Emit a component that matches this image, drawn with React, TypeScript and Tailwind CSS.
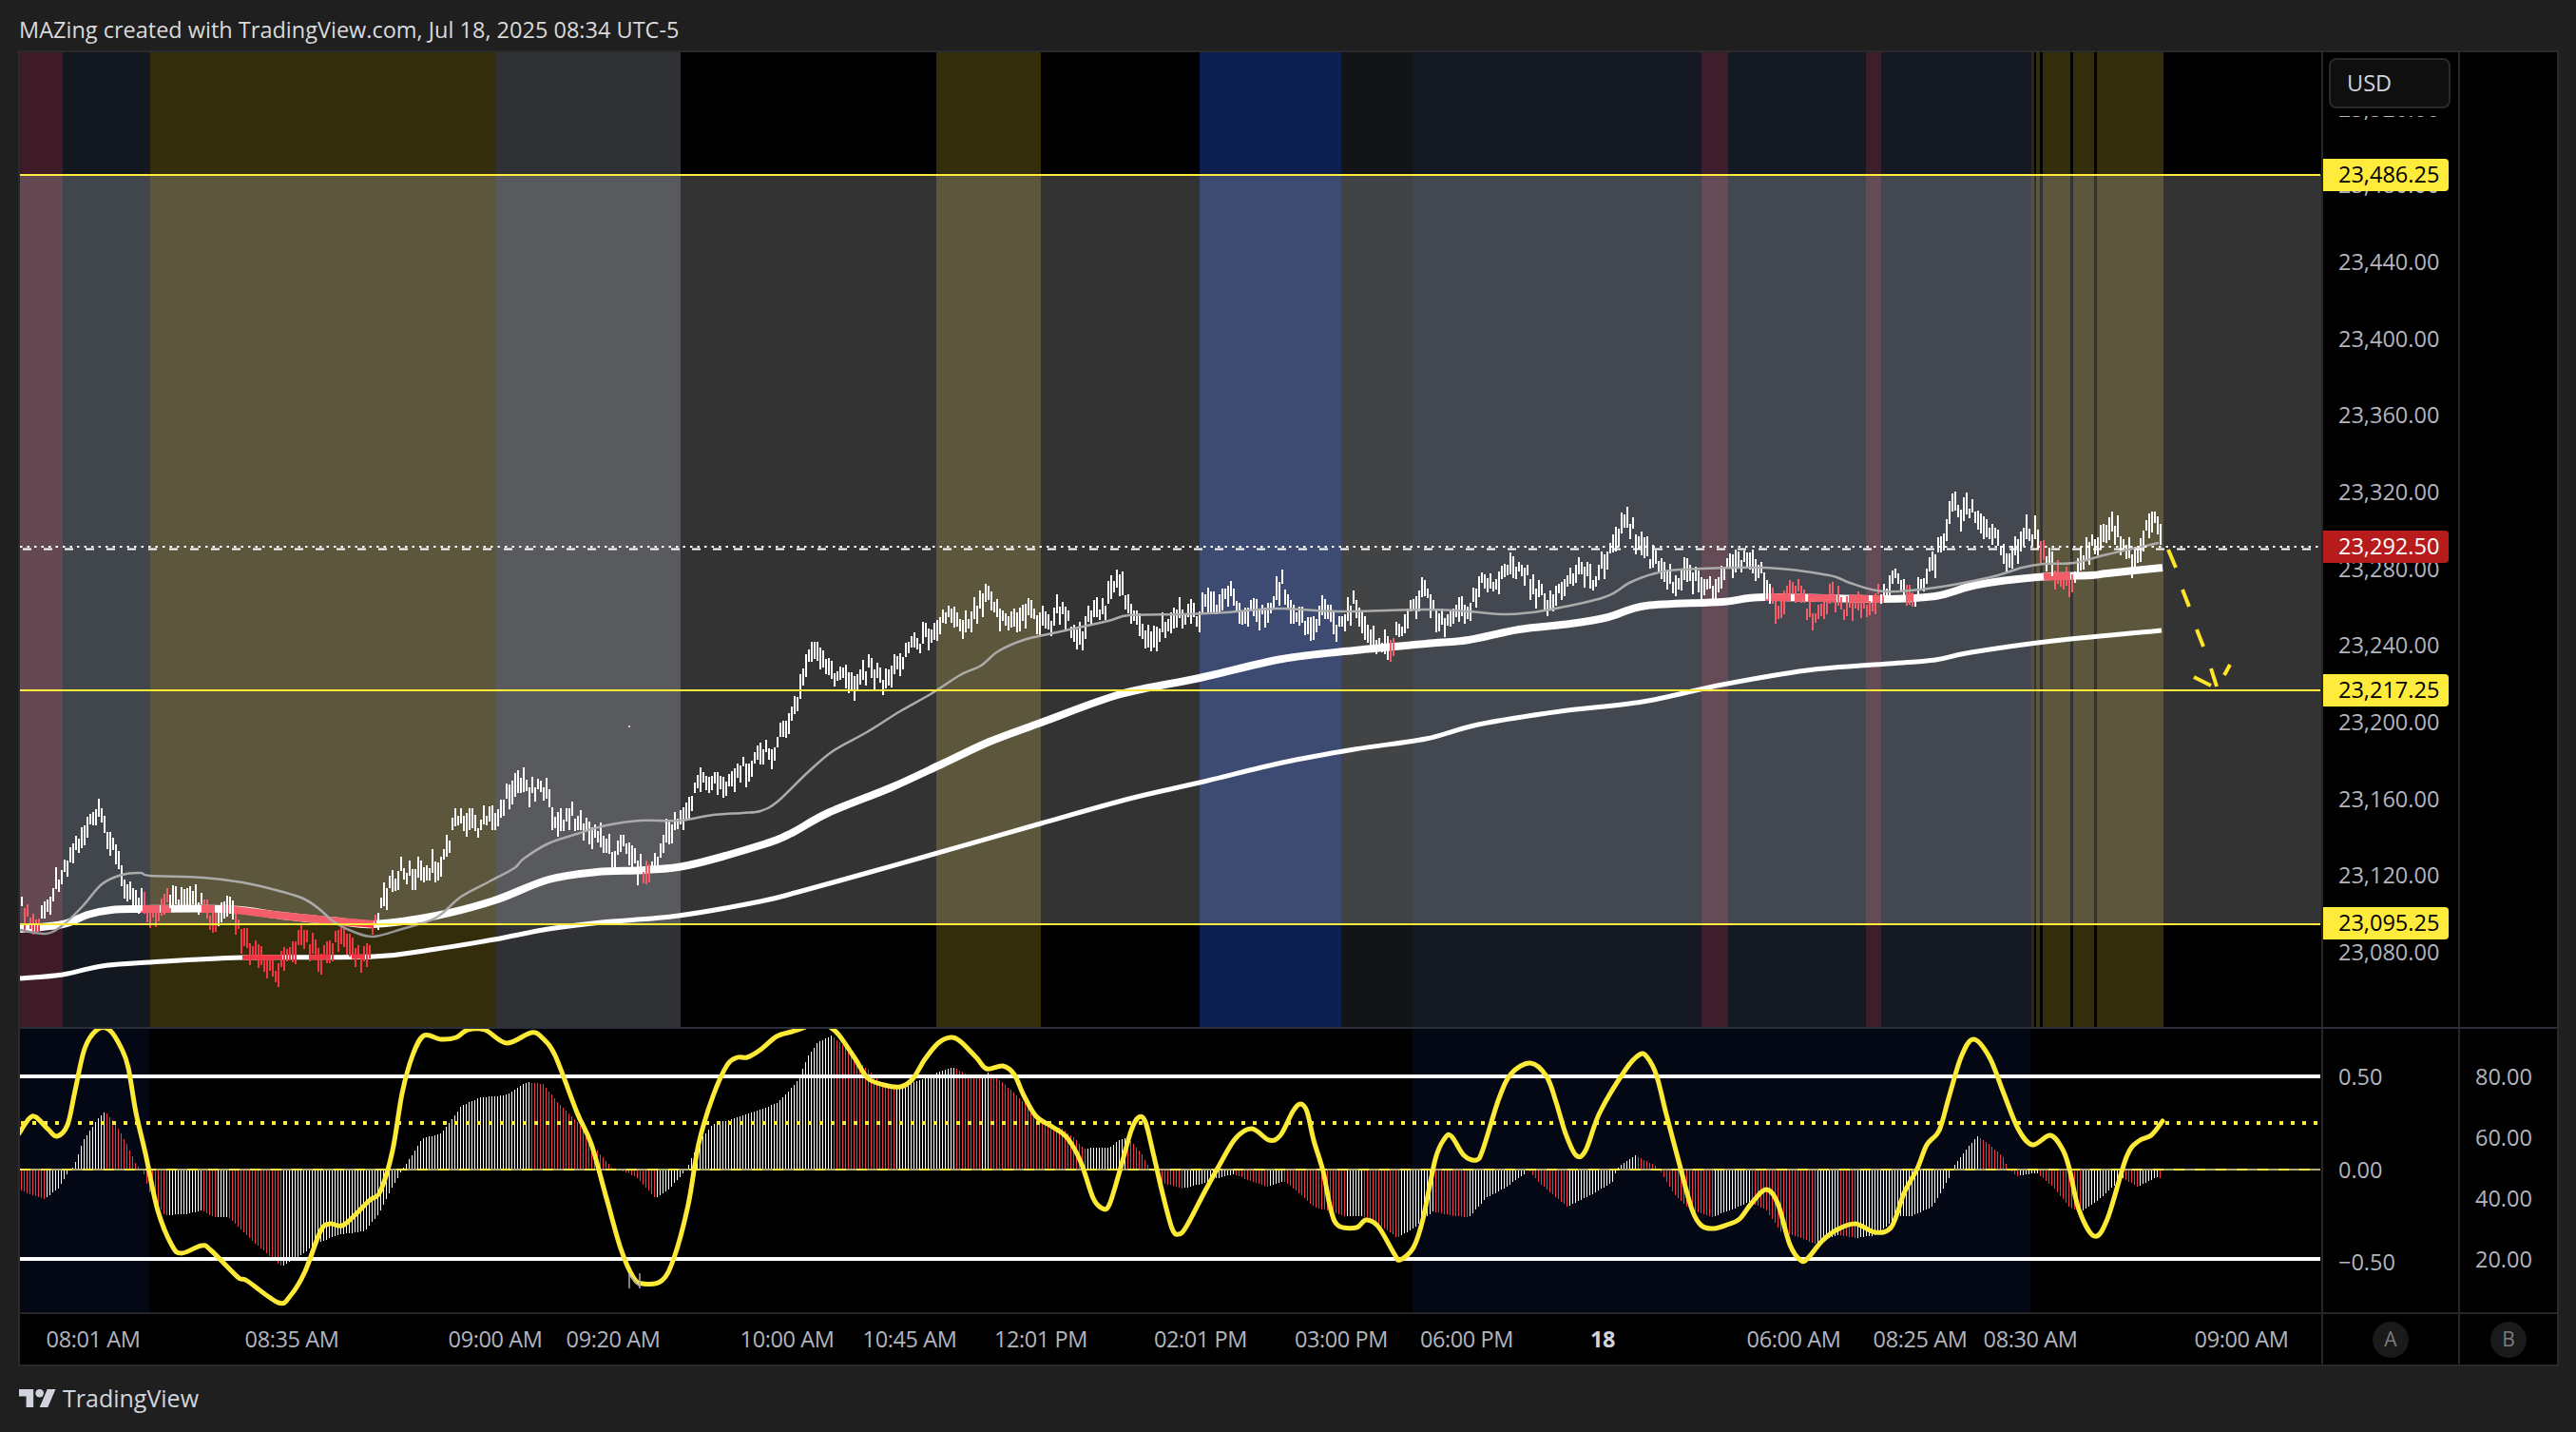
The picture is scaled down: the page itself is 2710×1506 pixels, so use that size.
import React from "react";

type Pt = number[];

const FONT = "font-['Open_Sans','Noto_Sans',sans-serif]";

const bands: [number, string][] = [
  [66, "bg-[#3e1b27]"], [158, "bg-[#121720]"], [521, "bg-[#342d0c]"], [716, "bg-[#2f3135]"],
  [985, "bg-black"], [1095, "bg-[#342d0c]"], [1262, "bg-black"], [1411, "bg-[#0d1f4f]"],
  [1486, "bg-[#131416]"], [1790, "bg-[#141923]"], [1818, "bg-[#3f1e2b]"], [1963, "bg-[#141923]"],
  [1979, "bg-[#3f1e2b]"], [2137, "bg-[#141923]"], [2140, "bg-[#2c270d]"], [2142, "bg-black"],
  [2146, "bg-[#342d0c]"], [2149, "bg-black"], [2178, "bg-[#342d0c]"], [2181, "bg-black"],
  [2203, "bg-[#342d0c]"], [2206, "bg-black"], [2276, "bg-[#342d0c]"], [2442, "bg-black"],
];

const lowerBands: [number, string][] = [
  [157, "bg-[#030814]"], [1486, "bg-black"], [2136, "bg-[#030814]"], [2442, "bg-black"],
];

const price: Pt = [
  23,957, 31,970, 36,977, 46,960, 56,933, 66,913, 77,893, 87,877, 102,857, 110,870, 120,897, 128,923, 138,940, 148,947,
  153,960, 166,967, 179,940, 196,950, 209,950, 219,967, 224,975, 235,957, 245,963, 253,987, 265,1003, 278,1017, 293,1020,
  301,1000, 321,987, 334,1010, 355,987, 370,997, 382,1007, 393,980, 400,953, 408,933, 421,917, 434,920, 449,913, 459,913,
  472,883, 482,857, 492,860, 500,870, 510,863, 520,860, 531,843, 541,820, 556,830, 569,823, 577,847, 587,870, 602,857,
  622,880, 633,880, 643,897, 658,887, 668,907, 679,920, 689,907, 699,883, 712,860, 724,853, 735,817, 755,827, 776,813,
  796,797, 811,790, 822,773, 838,740, 845,707, 853,680, 867,703, 880,710, 898,717, 912,703, 929,717, 943,700, 956,677,
  970,673, 983,657, 1001,643, 1014,657, 1028,637, 1039,617, 1048,643, 1063,657, 1081,640, 1090,650, 1104,657, 1112,640,
  1128,660, 1137,670, 1146,643, 1162,637, 1177,610, 1188,637, 1204,677, 1215,667, 1235,650, 1249,643, 1260,650, 1269,623,
  1280,640, 1291,623, 1304,640, 1329,650, 1347,613, 1358,637, 1371,657, 1383,657, 1392,637, 1403,660, 1423,637, 1438,660,
  1445,673, 1461,683, 1481,643, 1499,617, 1513,653, 1531,647, 1545,637, 1560,603, 1574,623, 1585,593, 1603,603, 1618,627,
  1632,633, 1650,617, 1658,597, 1676,607, 1688,593, 1699,560, 1708,550, 1716,553, 1725,577, 1741,590, 1763,620, 1772,603,
  1790,610, 1801,620, 1812,597, 1833,587, 1853,603, 1862,623, 1868,648, 1877,633, 1891,623, 1906,648, 1924,623, 1940,643,
  1953,633, 1967,640, 1973,630, 1980,623, 1995,600, 2004,620, 2011,637, 2020,613, 2031,597, 2042,570, 2054,527, 2060,540,
  2071,533, 2085,557, 2098,563, 2114,590, 2129,557, 2143,563, 2147,575, 2152,587, 2166,610, 2172,615, 2178,610, 2187,590,
  2203,573, 2222,552, 2232,570, 2242,590, 2248,580, 2256,557, 2267,547, 2273,567,
];

const redRanges: Pt[] = [
  [25, 42], [150, 175], [213, 228], [245, 396], [676, 684], [1462, 1466], [1862, 1976], [2005, 2012], [2145, 2149], [2160, 2181],
];

const grayMA: Pt = [
  21,978, 48,982, 66,973, 87,953, 107,930, 128,920, 148,918, 158,921, 214,923, 255,928, 286,935, 319,945, 337,957, 352,970,
  372,980, 393,985, 423,977, 459,965, 485,943, 515,927, 541,913, 551,903, 577,887, 607,877, 638,868, 673,863, 714,863,
  750,857, 781,855, 800,853, 818,843, 849,813, 876,790, 912,770, 947,748, 979,730, 1010,710, 1032,700, 1050,685, 1077,673,
  1112,665, 1166,653, 1188,647, 1246,646, 1291,644, 1345,640, 1407,643, 1500,641, 1545,643, 1585,646, 1625,642, 1688,628,
  1714,613, 1741,603, 1768,599, 1857,597, 1924,605, 1946,613, 1982,622, 2036,618, 2094,607, 2127,597, 2150,593, 2182,592,
  2217,583, 2271,571,
];

const thickMA: Pt = [
  21,977, 66,972, 92,962, 117,957, 148,956, 240,956, 296,963, 357,969, 393,972, 459,963, 520,947, 577,925, 628,917, 679,915,
  724,910, 800,889, 831,877, 871,855, 938,828, 992,803, 1041,780, 1095,760, 1179,730, 1262,713, 1349,693, 1425,684, 1500,677,
  1545,673, 1598,662, 1652,656, 1692,649, 1732,637, 1812,633, 1857,628, 1978,630, 2036,627, 2080,615, 2143,607, 2200,605,
  2217,603, 2275,597,
];

const slowMA: Pt = [
  21,1029, 66,1025, 107,1016, 158,1012, 255,1007, 393,1006, 459,998, 520,988, 577,977, 633,970, 714,963, 800,948, 840,938,
  916,917, 983,898, 1095,866, 1188,840, 1262,823, 1349,802, 1425,788, 1500,777, 1555,762, 1642,748, 1728,738, 1812,720, 1901,705,
  1987,698, 2036,694, 2074,686, 2160,674, 2274,663,
];

const thickRed: Pt[] = [
  [148, 166], [171, 180], [212, 226], [232, 393], [1857, 1884], [1890, 1897], [1902, 1932], [1946, 1966], [1970, 1982], [2005, 2012], [2150, 2178],
];
const slowRed: Pt[] = [[255, 296], [327, 347], [370, 384]];

const hist: Pt = [
  21,1252, 46,1261, 61,1250, 71,1233, 77,1227, 87,1200, 102,1177, 110,1169, 122,1183, 133,1203, 143,1225, 150,1232, 158,1257,
  173,1278, 194,1277, 212,1273, 224,1280, 240,1280, 265,1305, 296,1332, 316,1320, 332,1308, 357,1298, 383,1295, 398,1277,
  413,1247, 423,1230, 434,1213, 444,1197, 464,1192, 485,1163, 505,1154, 531,1152, 554,1138, 571,1140, 587,1160, 607,1180,
  628,1210, 643,1228, 668,1237, 689,1260, 704,1250, 722,1230, 735,1200, 750,1182, 776,1175, 800,1167, 817,1160, 830,1147,
  840,1134, 850,1110, 860,1096, 875,1089, 887,1100, 900,1115, 913,1125, 927,1139, 940,1145, 957,1139, 973,1134, 987,1127,
  1002,1122, 1017,1130, 1030,1132, 1040,1128, 1053,1137, 1067,1150, 1083,1165, 1100,1184, 1117,1187, 1130,1197, 1140,1208,
  1153,1207, 1167,1207, 1177,1199, 1185,1196, 1200,1212, 1208,1227, 1215,1234, 1223,1244, 1243,1250, 1263,1245, 1280,1239,
  1297,1235, 1313,1241, 1333,1248, 1350,1242, 1363,1252, 1383,1270, 1400,1274, 1413,1279, 1433,1279, 1453,1290, 1470,1302,
  1490,1289, 1507,1274, 1530,1279, 1545,1280, 1563,1260, 1583,1249, 1603,1235, 1607,1230, 1620,1245, 1648,1269, 1677,1255,
  1697,1242, 1700,1230, 1705,1225, 1720,1215, 1740,1225, 1745,1230, 1760,1255, 1777,1272, 1800,1280, 1817,1274, 1840,1264,
  1857,1272, 1873,1295, 1900,1304, 1908,1308, 1933,1299, 1952,1302, 1973,1299, 1997,1279, 2010,1279, 2033,1269, 2050,1239,
  2052,1230, 2067,1210, 2080,1195, 2093,1204, 2107,1217, 2112,1229, 2122,1237, 2130,1235, 2143,1234, 2160,1249, 2177,1270,
  2188,1275, 2207,1262, 2227,1244, 2233,1239, 2248,1248, 2270,1237, 2274,1241,
];

const osc: Pt = [
  20,1192, 31,1176, 38,1175, 51,1188, 60,1195, 71,1183, 79,1147, 89,1103, 102,1083, 115,1083, 128,1103, 135,1123, 143,1170,
  153,1213, 166,1273, 181,1310, 191,1318, 212,1310, 222,1315, 250,1343, 260,1347, 293,1370, 306,1362, 321,1337, 337,1295,
  347,1287, 362,1288, 388,1263, 400,1253, 413,1210, 423,1150, 434,1110, 446,1089, 464,1093, 480,1091, 492,1083, 510,1083,
  533,1097, 559,1086, 571,1092, 584,1110, 607,1170, 622,1203, 638,1260, 653,1313, 666,1343, 676,1350, 696,1347, 709,1323,
  724,1267, 735,1203, 750,1153, 765,1120, 776,1112, 786,1112, 800,1104, 817,1090, 833,1085, 845,1081, 860,1074, 873,1080,
  883,1089, 900,1114, 913,1134, 930,1141, 947,1143, 960,1135, 973,1114, 987,1097, 1000,1091, 1010,1095, 1027,1112, 1038,1124,
  1055,1121, 1067,1130, 1077,1152, 1090,1174, 1107,1185, 1123,1197, 1137,1222, 1150,1260, 1160,1271, 1167,1267, 1177,1235,
  1190,1189, 1198,1175, 1205,1180, 1213,1212, 1223,1255, 1233,1292, 1240,1298, 1248,1290, 1267,1254, 1283,1225, 1300,1197,
  1317,1187, 1335,1199, 1347,1194, 1360,1169, 1368,1161, 1375,1169, 1382,1199, 1392,1232, 1400,1272, 1408,1289, 1427,1291,
  1437,1283, 1450,1290, 1467,1319, 1473,1325, 1487,1312, 1497,1282, 1510,1219, 1520,1197, 1527,1195, 1540,1215, 1553,1220,
  1560,1209, 1577,1155, 1590,1129, 1610,1118, 1627,1132, 1637,1159, 1647,1192, 1658,1215, 1668,1210, 1683,1170, 1710,1125,
  1725,1109, 1733,1112, 1743,1132, 1753,1172, 1767,1225, 1780,1272, 1790,1289, 1803,1292, 1817,1288, 1830,1282, 1843,1265,
  1858,1251, 1870,1265, 1883,1309, 1895,1326, 1903,1322, 1917,1305, 1933,1293, 1952,1287, 1973,1296, 1990,1290, 2003,1255,
  2017,1229, 2027,1204, 2040,1189, 2050,1155, 2063,1112, 2076,1093, 2093,1112, 2108,1150, 2123,1187, 2138,1204, 2157,1194,
  2170,1209, 2177,1229, 2187,1272, 2203,1300, 2217,1282, 2237,1217, 2250,1200, 2263,1194, 2275,1179,
];

function interp(p: Pt, x: number) {
  if (x <= p[0]) return p[1];
  for (let i = 2; i < p.length; i += 2) {
    if (x <= p[i]) {
      const t = (x - p[i - 2]) / (p[i] - p[i - 2] || 1);
      return p[i - 1] + t * (p[i + 1] - p[i - 1]);
    }
  }
  return p[p.length - 1];
}

function smooth(p: Pt) {
  const n = p.length / 2;
  const X = (i: number) => p[Math.max(0, Math.min(n - 1, i)) * 2];
  const Y = (i: number) => p[Math.max(0, Math.min(n - 1, i)) * 2 + 1];
  let d = `M${X(0)} ${Y(0)}`;
  for (let i = 0; i < n - 1; i++) {
    const c1x = X(i) + (X(i + 1) - X(i - 1)) / 6;
    const c1y = Y(i) + (Y(i + 1) - Y(i - 1)) / 6;
    const c2x = X(i + 1) - (X(i + 2) - X(i)) / 6;
    const c2y = Y(i + 1) - (Y(i + 2) - Y(i)) / 6;
    d += `C${c1x.toFixed(1)} ${c1y.toFixed(1)} ${c2x.toFixed(1)} ${c2y.toFixed(1)} ${X(i + 1)} ${Y(i + 1)}`;
  }
  return d;
}

function segment(p: Pt, a: number, b: number) {
  const out: string[] = [];
  for (let x = a; x <= b; x += 3) out.push(`${x},${interp(p, x).toFixed(1)}`);
  out.push(`${b},${interp(p, b).toFixed(1)}`);
  return out.join(" ");
}

const rnd = (i: number) => {
  const v = Math.sin(i * 12.9898) * 43758.5453;
  return v - Math.floor(v);
};

function PriceBars() {
  const items: React.ReactNode[] = [];
  let i = 0;
  for (let x = 22; x <= 2274; x += 3, i++) {
    const c = interp(price, x) + (rnd(i) - 0.5) * 18;
    const half = 5 + rnd(i + 999) * 8;
    const red = redRanges.some(([a, b]) => x >= a && x <= b);
    items.push(
      <line key={x} x1={x + 0.5} x2={x + 0.5} y1={c - half} y2={c + half} stroke={red ? "#f23645" : "#ffffff"} strokeWidth={2} shapeRendering="crispEdges" />
    );
  }
  return <>{items}</>;
}

function HistBars() {
  const items: React.ReactNode[] = [];
  for (let x = 22; x <= 2273; x += 3) {
    const y = interp(hist, x);
    const prev = interp(hist, x - 3);
    const rising = 1230 - y >= 1230 - prev;
    items.push(
      <line key={x} x1={x + 0.5} x2={x + 0.5} y1={1230} y2={y} stroke={rising ? "#ffffff" : "#f23645"} strokeWidth={1} shapeRendering="crispEdges" />
    );
  }
  return <>{items}</>;
}

function Bands({ list }: { list: [number, string][] }) {
  let prev = 21;
  return (
    <div className="absolute inset-0 flex">
      {list.map(([end, cls], i) => {
        const w = end - prev;
        prev = end;
        return <div key={i} className={`shrink-0 h-full ${cls}`} style={{ width: w }} />;
      })}
    </div>
  );
}

function Tag({ text, y, cls }: { text: string; y: number; cls: string }) {
  return (
    <div className={`absolute left-0 w-[132px] h-[34px] rounded-r-[4px] flex items-center pl-[16px] text-[23.5px] leading-none ${cls}`} style={{ top: y - 17 - 55 }}>
      {text}
    </div>
  );
}

const priceTicks = ["23,520.00", "23,480.00", "23,440.00", "23,400.00", "23,360.00", "23,320.00", "23,280.00", "23,240.00", "23,200.00", "23,160.00", "23,120.00", "23,080.00"];

const timeTicks: [number, string, boolean?][] = [
  [98, "08:01 AM"], [307, "08:35 AM"], [521, "09:00 AM"], [645, "09:20 AM"], [828, "10:00 AM"], [957, "10:45 AM"], [1095, "12:01 PM"],
  [1263, "02:01 PM"], [1411, "03:00 PM"], [1543, "06:00 PM"], [1686, "18", true], [1887, "06:00 AM"], [2020, "08:25 AM"], [2136, "08:30 AM"], [2358, "09:00 AM"],
];

function TimeAxis() {
  let prev = 21;
  return (
    <div className="w-[2421px] flex items-center h-full">
      {timeTicks.map(([c, t, bold]) => {
        const m = c - prev;
        prev = c;
        return (
          <div key={c} className="w-0 flex justify-center shrink-0" style={{ marginLeft: m }}>
            <span className={`whitespace-nowrap text-[23.5px] leading-none tracking-[-0.4px] ${bold ? "font-bold text-[#d1d4dc]" : "text-[#b2b5be]"}`}>{t}</span>
          </div>
        );
      })}
    </div>
  );
}

export default function App() {
  return (
    <div className={`w-[2710px] h-[1506px] bg-[#1f1f1f] flex flex-col overflow-hidden ${FONT}`}>
      <div className="h-[53px] pl-[20px] pt-[11px] flex items-center text-[23.5px] leading-none text-[#dadada] whitespace-nowrap">
        MAZing created with TradingView.com, Jul 18, 2025 08:34 UTC-5
      </div>

      <div className="ml-[19px] w-[2673px] h-[1384px] border-2 border-[#2a2a2d] flex flex-col bg-black shrink-0">
        {/* price pane row */}
        <div className="flex h-[1025px]">
          <div className="relative w-[2421px] h-full overflow-hidden">
            <Bands list={bands} />
            <svg className="absolute inset-0" width={2421} height={1025} viewBox="21 55 2421 1025">
              <path d={smooth(slowMA)} fill="none" stroke="#fff" strokeWidth={5} />
              <path d={smooth(thickMA)} fill="none" stroke="#fff" strokeWidth={8} />
              {slowRed.map(([a, b]) => (
                <polyline key={a} points={segment(slowMA, a, b)} fill="none" stroke="#f23645" strokeWidth={5} />
              ))}
              {thickRed.map(([a, b]) => (
                <polyline key={a} points={segment(thickMA, a, b)} fill="none" stroke="#f23645" strokeWidth={8} />
              ))}
              <PriceBars />
              <path d={smooth(grayMA)} fill="none" stroke="#969696" strokeWidth={2.5} />
            </svg>
            <div className="absolute left-0 right-0 top-[129px] h-[788px] bg-white/20" />
            <svg className="absolute inset-0" width={2421} height={1025} viewBox="21 55 2421 1025">
              <g stroke="#ffeb3b" strokeWidth={2}>
                <line x1={21} x2={2441} y1={184} y2={184} />
                <line x1={21} x2={2441} y1={726} y2={726} />
                <line x1={21} x2={2441} y1={972} y2={972} />
              </g>
              <line x1={21} x2={2441} y1={575} y2={575} stroke="#fff" strokeWidth={2} strokeDasharray="2.5 5" />
              <line x1={24} x2={2441} y1={577.5} y2={577.5} stroke="#fff" strokeWidth={2} strokeDasharray="9 13" />
              <g stroke="#ffe42a" strokeWidth={4}>
                <line x1={2281} y1={578} x2={2289} y2={597} />
                <line x1={2296} y1={620} x2={2303} y2={638} />
                <line x1={2311} y1={662} x2={2318} y2={680} />
                <line x1={2326} y1={703} x2={2332} y2={722} />
                <line x1={2308} y1={712} x2={2326} y2={721} />
                <line x1={2340} y1={710} x2={2346} y2={699} />
              </g>
              <rect x={661} y={763} width={2} height={2} fill="#ccc" />
            </svg>
          </div>

          <div className="relative w-[144px] h-full border-l-2 border-[#262628] bg-black overflow-hidden text-[#b2b5be]">
            <div className="pt-[19px] flex flex-col pl-[16px]">
              {priceTicks.map((t) => (
                <div key={t} className="h-[80.7px] flex items-center text-[23.5px] leading-none">{t}</div>
              ))}
            </div>
            <div className="absolute left-0 right-0 top-0 h-[67px] bg-black" />
            <div className="absolute left-[6px] top-[6px] w-[128px] h-[53px] rounded-[8px] border-2 border-[#2a2a2d] bg-[#0f0f0f] flex items-center pl-[17px] text-[23.5px] text-[#d1d4dc]">USD</div>
            <Tag text="23,486.25" y={184} cls="bg-[#ffeb3b] text-black" />
            <Tag text="23,292.50" y={575} cls="bg-[#b71c1c] text-white" />
            <Tag text="23,217.25" y={726} cls="bg-[#ffeb3b] text-black" />
            <Tag text="23,095.25" y={971} cls="bg-[#ffeb3b] text-black" />
          </div>
          <div className="flex-1 h-full border-l-2 border-[#262628] bg-black" />
        </div>

        <div className="h-[2px] bg-[#2a2e39] shrink-0" />

        {/* oscillator pane row */}
        <div className="flex h-[298px]">
          <div className="relative w-[2421px] h-full overflow-hidden">
            <Bands list={lowerBands} />
            <svg className="absolute inset-0" width={2421} height={298} viewBox="21 1082 2421 298">
              <HistBars />
              <g stroke="#fff" strokeWidth={4}>
                <line x1={21} x2={2441} y1={1132} y2={1132} />
                <line x1={21} x2={2441} y1={1324} y2={1324} />
              </g>
              <line x1={21} x2={2441} y1={1230} y2={1230} stroke="#b2ab6b" strokeWidth={2} />
              <line x1={21} x2={2441} y1={1230} y2={1230} stroke="#ffeb3b" strokeWidth={2} strokeDasharray="11 11" />
              <line x1={22} x2={2441} y1={1181} y2={1181} stroke="#ffeb3b" strokeWidth={4} strokeDasharray="4 8" />
              <path d={smooth(osc)} fill="none" stroke="#fdea36" strokeWidth={5} strokeLinejoin="round" strokeLinecap="round" />
              <g stroke="#a9a9a9" strokeWidth={1.5} fill="none">
                <polyline points="662,1339 662,1355" />
                <polyline points="662,1341 673,1353" />
                <polyline points="673,1339 673,1355" />
              </g>
            </svg>
          </div>
          <div className="w-[144px] h-full border-l-2 border-[#262628] pt-[2px] pl-[16px] flex flex-col text-[#b2b5be] text-[23.5px] leading-none">
            {["0.50", "0.00", "−0.50"].map((t) => (
              <div key={t} className="h-[97.5px] flex items-center">{t}</div>
            ))}
          </div>
          <div className="flex-1 h-full border-l-2 border-[#262628] pt-[19px] pl-[16px] flex flex-col text-[#b2b5be] text-[23.5px] leading-none">
            {["80.00", "60.00", "40.00", "20.00"].map((t) => (
              <div key={t} className="h-[64px] flex items-center">{t}</div>
            ))}
          </div>
        </div>

        <div className="h-[2px] bg-[#262628] shrink-0" />

        {/* time axis row */}
        <div className="flex flex-1">
          <TimeAxis />
          <div className="w-[144px] h-full border-l-2 border-[#262628] flex items-center justify-center">
            <div className="w-[38px] h-[38px] rounded-full bg-[#1a1a1a] text-[#7c7c7c] text-[21px] flex items-center justify-center">A</div>
          </div>
          <div className="flex-1 h-full border-l-2 border-[#262628] flex items-center justify-center">
            <div className="w-[38px] h-[38px] rounded-full bg-[#1a1a1a] text-[#7c7c7c] text-[21px] flex items-center justify-center">B</div>
          </div>
        </div>
      </div>

      <div className="flex-1 flex items-center pl-[20px] pb-[2px] gap-[7px] text-[#d1d4dc]">
        <svg className="w-[39px] h-[19px]" viewBox="0 4 36 18" preserveAspectRatio="none" fill="#d1d4dc">
          <path d="M14 22H7V11H0V4h14v18zM28 22h-8l7.5-18h8L28 22z" />
          <circle cx="20" cy="8" r="4" />
        </svg>
        <span className="text-[25px] leading-none">TradingView</span>
      </div>
    </div>
  );
}
